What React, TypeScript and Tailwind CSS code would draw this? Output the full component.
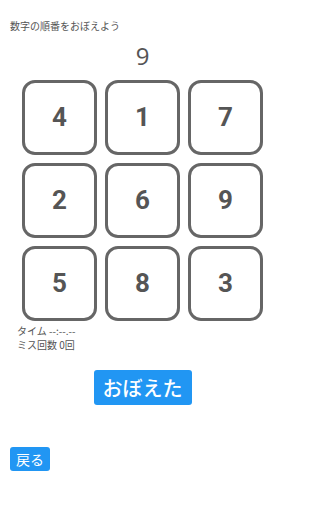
import React from "react";

const nums = [4, 1, 7, 2, 6, 9, 5, 8, 3];

export default function App() {
  return (
    <div
      className="w-[288px] h-[512px] bg-white text-[#555]"
      style={{ fontFamily: '"Noto Sans CJK JP", "Noto Sans", sans-serif' }}
    >
      <div className="w-[285px]">
        <div className="pt-[19px] pl-[10px] text-[10px] leading-[14px] text-[#555]">
          数字の順番をおぼえよう
        </div>
        <div
          className="mt-[9px] text-center text-[24px] leading-[28px] text-[#555]"
          style={{ fontFamily: '"Open Sans", "Noto Sans", sans-serif' }}
        >
          9
        </div>
        <div className="mt-[10px] flex justify-center">
          <div className="grid grid-cols-[75px_75px_75px] gap-[8px]">
            {nums.map((n) => (
              <div
                key={n}
                className="w-[75px] h-[75px] border-[3px] border-[#666] rounded-[13px] flex items-center justify-center text-[26px] font-bold text-[#555]"
                style={{ fontFamily: 'Roboto, "Liberation Sans", sans-serif' }}
              >
                {n}
              </div>
            ))}
          </div>
        </div>
        <div className="mt-[3px] pl-[17px] text-[10px] leading-[14px] text-[#555]">
          <div>タイム --:--.--</div>
          <div>ミス回数 0回</div>
        </div>
        <div className="mt-[18px] flex justify-center">
          <button className="h-[35px] px-[9px] rounded-[3px] bg-[#2196f3] text-white text-[20px] leading-[35px] font-medium">
            おぼえた
          </button>
        </div>
        <div className="mt-[41px] pl-[10px]">
          <button className="h-[24px] px-[6px] rounded-[3px] bg-[#2196f3] text-white text-[14px] leading-[24px]">
            戻る
          </button>
        </div>
      </div>
    </div>
  );
}
